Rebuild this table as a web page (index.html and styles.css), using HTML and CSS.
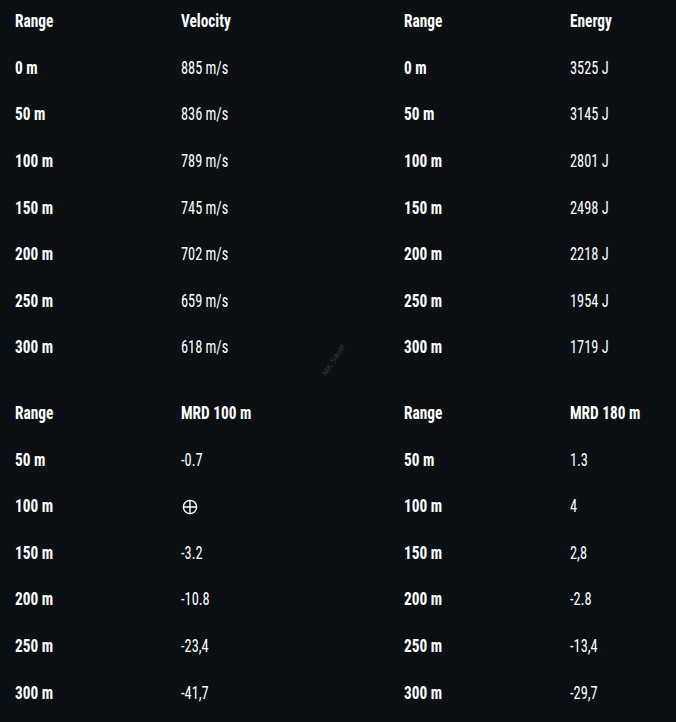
FILE: index.html
```html
<!DOCTYPE html>
<html>
<head>
<meta charset="utf-8">
<link rel="stylesheet" href="styles.css">
</head>
<body>
<main class="page">
  <section class="table">
    <div class="th"><span>Range</span></div><div class="th"><span>Velocity</span></div><div class="th"><span>Range</span></div><div class="th"><span>Energy</span></div>
    <div class="rc"><span>0 m</span></div><div class="vc"><span>885 m/s</span></div><div class="rc"><span>0 m</span></div><div class="vc"><span>3525 J</span></div>
    <div class="rc"><span>50 m</span></div><div class="vc"><span>836 m/s</span></div><div class="rc"><span>50 m</span></div><div class="vc"><span>3145 J</span></div>
    <div class="rc"><span>100 m</span></div><div class="vc"><span>789 m/s</span></div><div class="rc"><span>100 m</span></div><div class="vc"><span>2801 J</span></div>
    <div class="rc"><span>150 m</span></div><div class="vc"><span>745 m/s</span></div><div class="rc"><span>150 m</span></div><div class="vc"><span>2498 J</span></div>
    <div class="rc"><span>200 m</span></div><div class="vc"><span>702 m/s</span></div><div class="rc"><span>200 m</span></div><div class="vc"><span>2218 J</span></div>
    <div class="rc"><span>250 m</span></div><div class="vc"><span>659 m/s</span></div><div class="rc"><span>250 m</span></div><div class="vc"><span>1954 J</span></div>
    <div class="rc"><span>300 m</span></div><div class="vc"><span>618 m/s</span></div><div class="rc"><span>300 m</span></div><div class="vc"><span>1719 J</span></div>
  </section>
  <section class="table">
    <div class="th"><span>Range</span></div><div class="th"><span>MRD 100 m</span></div><div class="th"><span>Range</span></div><div class="th"><span>MRD 180 m</span></div>
    <div class="rc"><span>50 m</span></div><div class="vc"><span>-0.7</span></div><div class="rc"><span>50 m</span></div><div class="vc"><span>1.3</span></div>
    <div class="rc"><span>100 m</span></div><div class="vc"><svg class="zero" width="16" height="16" viewBox="0 0 16 16" aria-label="zero"><circle cx="8" cy="8" r="6.6" fill="none" stroke="#fff" stroke-width="1.4"/><path d="M8 1.4V14.6M1.4 8H14.6" stroke="#fff" stroke-width="1.4"/></svg></div><div class="rc"><span>100 m</span></div><div class="vc"><span>4</span></div>
    <div class="rc"><span>150 m</span></div><div class="vc"><span>-3.2</span></div><div class="rc"><span>150 m</span></div><div class="vc"><span>2,8</span></div>
    <div class="rc"><span>200 m</span></div><div class="vc"><span>-10.8</span></div><div class="rc"><span>200 m</span></div><div class="vc"><span>-2.8</span></div>
    <div class="rc"><span>250 m</span></div><div class="vc"><span>-23,4</span></div><div class="rc"><span>250 m</span></div><div class="vc"><span>-13,4</span></div>
    <div class="rc"><span>300 m</span></div><div class="vc"><span>-41,7</span></div><div class="rc"><span>300 m</span></div><div class="vc"><span>-29,7</span></div>
  </section>
  <div class="watermark">MK Sauer</div>
</main>
</body>
</html>
```

FILE: styles.css
```css
html, body {
  margin: 0;
  padding: 0;
  background: #0b1014;
}
.page {
  position: relative;
  width: 676px;
  height: 722px;
  overflow: hidden;
  font-family: Roboto, "DejaVu Sans Condensed", sans-serif;
  font-stretch: 75%;
  color: #ffffff;
  display: flex;
  flex-direction: column;
  gap: 19px;
}
.table {
  display: grid;
  grid-template-columns: 166px 223px 166px 1fr;
  grid-auto-rows: 46.6px;
  padding-left: 15px;
}
.table:first-child {
  margin-top: -2px;
}
.th, .rc, .vc {
  display: flex;
  align-items: center;
  font-size: 17.5px;
  white-space: nowrap;
}
.th span, .rc span {
  font-weight: 700;
  transform: scaleX(0.875);
  transform-origin: left center;
}
.vc span {
  font-weight: 400;
  transform: scaleX(0.82);
  transform-origin: left center;
}
.zero {
  display: block;
  margin-left: 1px;
  margin-top: 1px;
}
.watermark {
  position: absolute;
  left: 316px;
  top: 355px;
  font-family: "Liberation Sans", sans-serif;
  font-stretch: 100%;
  font-size: 8px;
  color: #353b41;
  transform: rotate(-58deg);
  transform-origin: center;
}
```
